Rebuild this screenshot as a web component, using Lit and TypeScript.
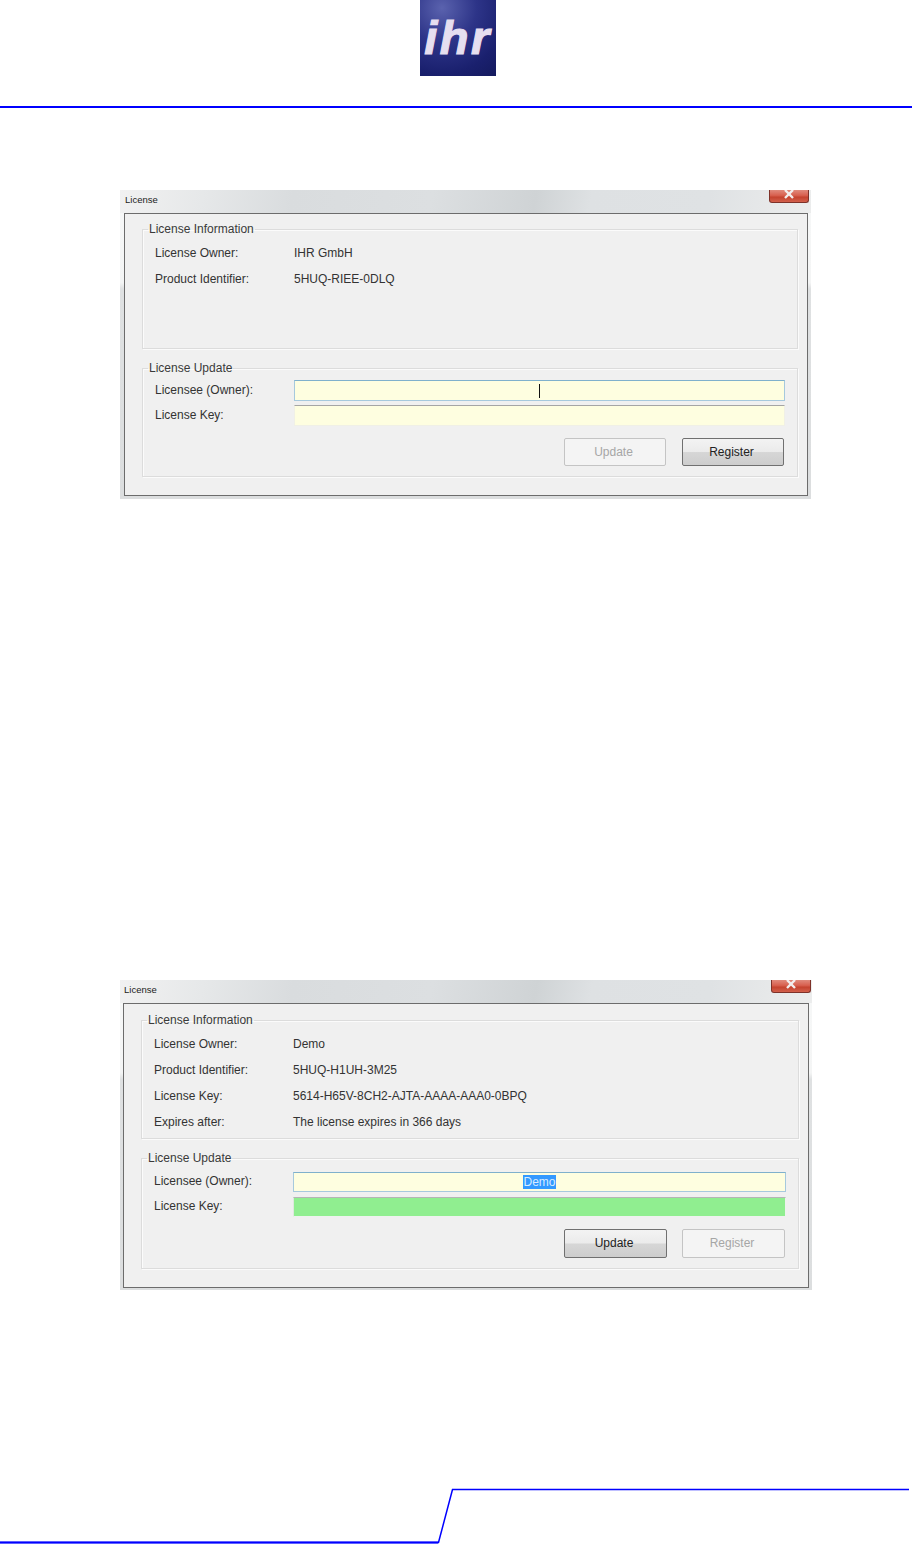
import { LitElement, html, css } from "lit";
import { customElement, property } from "lit/decorators.js";

@customElement("license-dialog")
class LicenseDialog extends LitElement {
  @property() variant = "first";
  @property({ type: Array }) info: [string, string][] = [];
  @property() owner = "";
  @property({ type: Boolean }) licensed = false;

  static styles = css`
    :host { display: block; }
    .dialog {
      display: flex; flex-direction: column; box-sizing: border-box;
      width: 691px; height: 309px; padding: 0 3px 3px 4px;
      background: linear-gradient(180deg, #f7f8f8 0, #f4f5f5 30%, #dfe1e2 32%, #dcdedf 100%);
      font-family: "Liberation Sans", Arial, sans-serif; font-size: 12px; color: #333;
    }
    .dialog.second { width: 692px; height: 310px; padding: 0 3px 2px 3px; }
    .titlebar {
      flex: none; height: 23px; margin: 0 -3px 0 -4px; padding-left: 5px; display: flex; justify-content: space-between; align-items: flex-start;
      background: linear-gradient(100deg, #f1f1f1 0, #e6e8e9 12%, #d9dcde 25%, #dcdfe1 45%, #cfd3d5 60%, #dee1e3 68%, #dfe2e4 85%, #eceded 100%);
    }
    .second .titlebar { margin: 0 -3px; padding-left: 4px; }
    .title { font-size: 9.5px; line-height: 19px; color: #222; }
    .close {
      width: 38px; height: 12px; margin-right: 2px; border: 1px solid #7e3229; border-top: 0; border-radius: 0 0 3px 3px;
      background: linear-gradient(180deg, #e08a7c 0, #d8604f 45%, #c5432f 60%, #d2604c 100%);
      display: flex; justify-content: center;
    }
    .second .close { margin-right: 1px; }
    .close svg { display: block; }
    .client {
      flex: 1; min-height: 0; display: flex; flex-direction: column; gap: 12px;
      box-sizing: border-box; border: 1px solid #6c6c6c; background: #f0f0f0;
      padding: 8px 9px 0 17px;
    }
    .second .client { padding-top: 9px; }
    fieldset {
      margin: 0; padding: 4px 12px 0; min-width: 0; box-sizing: border-box;
      border: 1px solid #dcdcdc; box-shadow: inset 1px 1px 0 #fbfbfb, 1px 1px 0 #fbfbfb;
    }
    .g1 { height: 127px; }
    .g2 { height: 116px; padding-top: 5px; }
    .second .g1 { height: 126px; }
    .second .g2 { height: 118px; padding-top: 7px; }
    legend { padding: 0 1px; margin-left: -7px; white-space: nowrap; line-height: 14px; color: #3a3a3a; }
    .row { display: flex; align-items: center; height: 26px; }
    .label { flex: none; width: 139px; }
    .field-row { display: flex; align-items: center; height: 21px; margin-bottom: 4px; }
    .field-row .label { padding-bottom: 2px; }
    .second .field-row { height: 20px; margin-bottom: 5px; }
    .input {
      flex: 1; box-sizing: border-box; height: 100%; display: flex; align-items: center; justify-content: center;
      background: #fefee0; border: 1px solid #f0f0e6; border-top-color: #a5a5a5;
    }
    .input.focus { border: 1px solid #a6c9dd; border-top-color: #7fb0cc; }
    .input.ok { background: #90ee90; border-color: #eef2ee; border-top-color: #b5b5b5; border-left-color: #dfe8df; }
    .caret { width: 1px; height: 14px; background: #111; }
    .sel { background: #3399ff; color: #d8ecff; line-height: 14px; margin-bottom: 1px; }
    .actions { display: flex; justify-content: flex-end; gap: 16px; margin-top: 12px; padding-right: 1px; }
    .second .actions { gap: 15px; }
    .btn {
      box-sizing: border-box; width: 102px; height: 28px; padding: 0 3px 1px 0; display: flex; align-items: center; justify-content: center;
      border: 1px solid #707070; border-radius: 2px; color: #222;
      background: linear-gradient(180deg, #f3f3f3 0, #ebebeb 48%, #d6d6d6 52%, #cdcdcd 100%);
    }
    .second .btn { width: 103px; height: 29px; }
    .btn.off { border-color: #c4c4c4; color: #a6a6a6; background: #f4f4f4; }
  `;

  render() {
    const second = this.variant === "second";
    return html`
      <div class="dialog ${this.variant}">
        <div class="titlebar">
          <span class="title">License</span>
          <div class="close">
            <svg width="14" height="10" viewBox="0 0 14 10"><path d="M3 0 L11 8 M11 0 L3 8" stroke="#f3eeee" stroke-width="2.4" fill="none"/></svg>
          </div>
        </div>
        <div class="client">
          <fieldset class="g1">
            <legend>License Information</legend>
            ${this.info.map(([k, v]) => html`<div class="row"><span class="label">${k}</span><span>${v}</span></div>`)}
          </fieldset>
          <fieldset class="g2">
            <legend>License Update</legend>
            <div class="field-row">
              <span class="label">Licensee (Owner):</span>
              <div class="input focus">
                ${this.owner ? html`<span class="sel">${this.owner}</span>` : html`<span class="caret"></span>`}
              </div>
            </div>
            <div class="field-row">
              <span class="label">License Key:</span>
              <div class="input ${second ? "ok" : ""}"></div>
            </div>
            <div class="actions">
              <div class="btn ${this.licensed ? "" : "off"}">Update</div>
              <div class="btn ${this.licensed ? "off" : ""}">Register</div>
            </div>
          </fieldset>
        </div>
      </div>
    `;
  }
}

@customElement("app-root")
class AppRoot extends LitElement {
  static styles = css`
    :host { display: block; width: 912px; height: 1544px; background: #fff; overflow: hidden; }
    header { box-sizing: border-box; height: 108px; border-bottom: 2px solid #0000ff; padding-left: 420px; }
    .logo {
      box-sizing: border-box; width: 76px; height: 76px; padding-top: 10px; overflow: hidden; text-align: center;
      background: radial-gradient(circle at 22px 8px, #5a62ae 0, #2d3488 40%, #1a206e 75%, #141a5e 100%);
      font-family: "Liberation Sans", Arial, sans-serif; font-weight: 700; font-style: italic;
      font-size: 47px; line-height: 56px; letter-spacing: 2.5px; color: #e6dff0;
      -webkit-text-stroke: 1.2px #e6dff0;
    }
    .one { margin: 82px 0 0 120px; }
    .two { margin: 481px 0 0 120px; }
    .foot { display: block; margin-top: 198px; }
  `;

  render() {
    return html`
      <header><div class="logo">ihr</div></header>
      <license-dialog class="one" variant="first" .info=${[
        ["License Owner:", "IHR GmbH"],
        ["Product Identifier:", "5HUQ-RIEE-0DLQ"],
      ]}></license-dialog>
      <license-dialog class="two" variant="second" owner="Demo" licensed .info=${[
        ["License Owner:", "Demo"],
        ["Product Identifier:", "5HUQ-H1UH-3M25"],
        ["License Key:", "5614-H65V-8CH2-AJTA-AAAA-AAA0-0BPQ"],
        ["Expires after:", "The license expires in 366 days"],
      ]}></license-dialog>
      <svg class="foot" width="912" height="56" viewBox="0 0 912 56">
        <path d="M0 54.5 H438.5 L452.5 1.5 H909" fill="none" stroke="#0000ff" stroke-width="1.5"/>
        <path d="M0 54.5 H438" fill="none" stroke="#0000ff" stroke-width="2"/>
      </svg>
    `;
  }
}
